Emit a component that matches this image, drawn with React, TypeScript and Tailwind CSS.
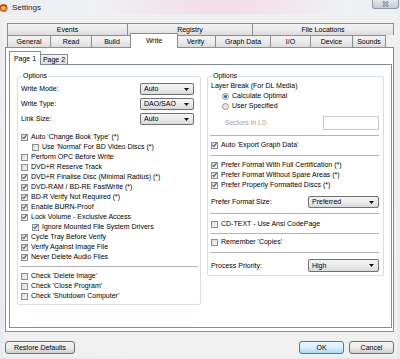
import { clsx } from 'clsx';

const cn = (...a: Parameters<typeof clsx>) => clsx(a);

function Check({ checked }: { checked?: boolean }) {
  return (
    <span className="w-[7px] h-[7px] shrink-0 border border-[#8e8f8f] bg-gradient-to-br from-[#d8d8d8] to-[#fafafa] flex items-center justify-center">
      {checked && (
        <svg width="6" height="6" viewBox="0 0 6 6">
          <path d="M0.7 3.1 L2.3 4.8 L5.4 0.8" fill="none" stroke="#3a5488" strokeWidth="1.3" />
        </svg>
      )}
    </span>
  );
}

function Radio({ on }: { on?: boolean }) {
  return (
    <span className="w-[7px] h-[7px] shrink-0 rounded-full border border-[#8e8f8f] bg-gradient-to-br from-[#d8d8d8] to-[#fafafa] flex items-center justify-center">
      {on && <span className="w-[3px] h-[3px] rounded-full bg-[#1d5fa8]" />}
    </span>
  );
}

function CheckRow({ label, checked, indent }: { label: string; checked?: boolean; indent?: boolean }) {
  return (
    <div className={cn('h-[10px] flex items-center gap-[3px] whitespace-nowrap', indent && 'pl-[11px]')}>
      <Check checked={checked} />
      <span>{label}</span>
    </div>
  );
}

function Combo({ value, className }: { value: string; className?: string }) {
  return (
    <div
      className={cn(
        'h-[12px] flex items-center justify-between border border-[#707070] rounded-[2px] bg-gradient-to-b from-[#f4f4f4] via-[#ebebeb] to-[#d9d9d9] pl-[3px] pr-[4px]',
        className
      )}
    >
      <span>{value}</span>
      <svg width="5" height="3" viewBox="0 0 5 3">
        <path d="M0 0h5L2.5 3z" fill="#111" />
      </svg>
    </div>
  );
}

function Sep({ className }: { className?: string }) {
  return <div className={cn('h-px bg-[#b5b5b5] -mx-[1px]', className)} />;
}

const row1 = [
  { label: 'Events', w: 'w-[121px]' },
  { label: 'Registry', w: 'w-[126px]' },
  { label: 'File Locations', w: 'w-[142px]' },
];

const row2 = [
  { label: 'General', w: 'w-[44px]' },
  { label: 'Read', w: 'w-[42px]' },
  { label: 'Build', w: 'w-[42px]' },
  { label: 'Write', w: 'w-[48px]', active: true },
  { label: 'Verify', w: 'w-[41px]' },
  { label: 'Graph Data', w: 'w-[56px]' },
  { label: 'I/O', w: 'w-[41px]' },
  { label: 'Device', w: 'w-[43px]' },
  { label: 'Sounds', w: 'w-[34px]' },
];

const tabBase = 'h-[12px] flex items-center justify-center border border-[#898c95] border-b-0 -ml-px first:ml-0';
const tabIdle = 'bg-gradient-to-b from-[#f3f3f3] via-[#ebebeb] to-[#dcdcdc]';

export default function App() {
  return (
    <div className="w-[400px] h-[359px] overflow-hidden flex flex-col font-['Liberation_Sans',Arial,sans-serif] text-[7px] leading-[8px] text-black bg-[#e9edf2] bg-[radial-gradient(ellipse_at_55%_0%,#f3dbe8_0%,#eef0f4_40%,#e6eaf0_100%)]">
      {/* Title bar */}
      <div className="h-[14px] shrink-0 relative flex items-center">
        <svg width="10" height="10" viewBox="0 0 10 10" className="-ml-[1px] mt-[1px]">
          <circle cx="4.5" cy="5" r="4" fill="#d2661e" />
          <circle cx="4.5" cy="5" r="2.4" fill="#f0a53a" />
          <circle cx="4.5" cy="5" r="0.9" fill="#fbe3b0" />
          <path d="M1 3.5 Q4.5 0.5 8 3.5" stroke="#b5301a" strokeWidth="1" fill="none" />
        </svg>
        <span className="ml-[3px] mt-[1px] text-[8px] leading-[9px] text-[#1e1e1e]">Settings</span>
        <div className="absolute top-0 right-[1px] w-[27px] h-[9px] rounded-b-[3px] border border-t-0 border-[#8e97a6] bg-gradient-to-b from-[#e4e7ec] to-[#c3c9d2] flex items-center justify-center">
          <svg width="7" height="6" viewBox="0 0 7 6">
            <path d="M1 0.5 L6 5.5 M6 0.5 L1 5.5" stroke="#5d6677" strokeWidth="2" />
            <path d="M1 0.5 L6 5.5 M6 0.5 L1 5.5" stroke="#f4f5f7" strokeWidth="0.9" />
          </svg>
        </div>
      </div>

      {/* Client area */}
      <div className="mx-[3px] h-[343px] bg-[#f0f0f0] flex flex-col pt-[9px] pl-[2px] pr-[3px]">
        {/* Tab rows */}
        <div className="flex ml-[2px]">
          {row1.map((t) => (
            <div key={t.label} className={cn(tabBase, tabIdle, t.w)}>
              {t.label}
            </div>
          ))}
        </div>
        <div className="flex items-end h-[12px] ml-[2px]">
          {row2.map((t) =>
            t.active ? (
              <div
                key={t.label}
                className={cn(
                  'relative z-10 h-[15px] -mb-px -ml-[3px] -mr-[2px] flex items-center justify-center border border-[#898c95] border-b-0 bg-white',
                  t.w
                )}
              >
                {t.label}
              </div>
            ) : (
              <div key={t.label} className={cn(tabBase, tabIdle, t.w)}>
                {t.label}
              </div>
            )
          )}
        </div>

        {/* Tab panel */}
        <div className="h-[285px] border border-[#898c95] bg-white flex flex-col pt-[2px] pl-[3px] pr-[1px] pb-[3px]">
          {/* Page tabs */}
          <div className="flex items-end h-[14px]">
            <div className="relative z-10 w-[32px] h-[14px] -mb-px flex items-center justify-center border border-[#898c95] border-b-0 bg-white">
              Page 1
            </div>
            <div className={cn('w-[28px] h-[10px] -ml-px flex items-center justify-center border border-[#898c95] border-b-0', tabIdle)}>
              Page 2
            </div>
          </div>

          {/* Page panel */}
          <div className="flex-1 border border-[#898c95] bg-white flex items-start gap-[6px] pt-[7px] px-[7px]">
            {/* Left options */}
            <fieldset className="w-[184px] border border-[#d5dfe5] rounded-[2px] px-[3px] pb-[3px]">
              <legend className="ml-[1px] px-[1px] leading-[8px]">Options</legend>
              <div className="flex flex-col gap-[3px] mt-[3px] pr-[3px]">
                <div className="h-[12px] flex items-center justify-between">
                  <span>Write Mode:</span>
                  <Combo value="Auto" className="w-[54px]" />
                </div>
                <div className="h-[12px] flex items-center justify-between">
                  <span>Write Type:</span>
                  <Combo value="DAO/SAO" className="w-[54px]" />
                </div>
                <div className="h-[12px] flex items-center justify-between">
                  <span>Link Size:</span>
                  <Combo value="Auto" className="w-[54px]" />
                </div>
              </div>
              <div className="flex flex-col mt-[7px]">
                <CheckRow label="Auto 'Change Book Type' (*)" checked />
                <CheckRow label="Use 'Normal' For BD Video Discs (*)" indent />
                <CheckRow label="Perform OPC Before Write" />
                <CheckRow label="DVD+R Reserve Track" />
                <CheckRow label="DVD+R Finalise Disc (Minimal Radius) (*)" checked />
                <CheckRow label="DVD-RAM / BD-RE FastWrite (*)" checked />
                <CheckRow label="BD-R Verify Not Required (*)" checked />
                <CheckRow label="Enable BURN-Proof" checked />
                <CheckRow label="Lock Volume - Exclusive Access" checked />
                <CheckRow label="Ignore Mounted File System Drivers" checked indent />
                <CheckRow label="Cycle Tray Before Verify" checked />
                <CheckRow label="Verify Against Image File" checked />
                <CheckRow label="Never Delete Audio Files" checked />
              </div>
              <Sep className="mt-[4px]" />
              <div className="flex flex-col mt-[4px]">
                <CheckRow label="Check 'Delete Image'" />
                <CheckRow label="Check 'Close Program'" />
                <CheckRow label="Check 'Shutdown Computer'" />
              </div>
            </fieldset>

            {/* Right options */}
            <fieldset className="w-[177px] border border-[#d5dfe5] rounded-[2px] px-[3px] pb-[3px]">
              <legend className="ml-[1px] px-[1px] leading-[8px]">Options</legend>
              <div className="h-[10px] flex items-center mt-[1px]">Layer Break (For DL Media)</div>
              <div className="h-[10px] flex items-center gap-[3px] pl-[11px]">
                <Radio on />
                <span>Calculate Optimal</span>
              </div>
              <div className="h-[10px] flex items-center gap-[3px] pl-[11px]">
                <Radio />
                <span>User Specified</span>
              </div>
              <div className="h-[14px] mt-[5px] flex items-center justify-between pl-[14px] pr-[1px]">
                <span className="text-[#a0a0a0]">Sectors in L0:</span>
                <div className="w-[56px] h-[14px] border border-[#c9c9c9] bg-white" />
              </div>
              <Sep className="mt-[5px] mr-[1px]" />
              <div className="flex flex-col mt-[4px]">
                <CheckRow label="Auto 'Export Graph Data'" checked />
              </div>
              <Sep className="mt-[5px] mr-[1px]" />
              <div className="flex flex-col mt-[4px]">
                <CheckRow label="Prefer Format With Full Certification (*)" checked />
                <CheckRow label="Prefer Format Without Spare Areas (*)" checked />
                <CheckRow label="Prefer Properly Formatted Discs (*)" checked />
              </div>
              <div className="h-[12px] mt-[6px] flex items-center justify-between pr-[1px]">
                <span>Prefer Format Size:</span>
                <Combo value="Preferred" className="w-[71px]" />
              </div>
              <Sep className="mt-[5px] mr-[1px]" />
              <div className="flex flex-col mt-[5px]">
                <CheckRow label="CD-TEXT - Use Ansi CodePage" />
              </div>
              <Sep className="mt-[4px] mr-[1px]" />
              <div className="flex flex-col mt-[3px]">
                <CheckRow label="Remember 'Copies'" />
              </div>
              <Sep className="mt-[5px] mr-[1px]" />
              <div className="h-[13px] mt-[6px] flex items-center justify-between pr-[1px]">
                <span>Process Priority:</span>
                <Combo value="High" className="w-[71px] h-[13px]" />
              </div>
            </fieldset>
          </div>
        </div>

        {/* Bottom buttons */}
        <div className="flex items-center mt-[9px] h-[13px]">
          <button className="w-[70px] h-[13px] rounded-[3px] border border-[#707070] bg-gradient-to-b from-[#f2f2f2] via-[#ebebeb] to-[#cfcfcf] leading-[8px]">
            Restore Defaults
          </button>
          <div className="flex-1" />
          <button className="w-[45px] h-[13px] rounded-[3px] border border-[#3c7fb1] bg-gradient-to-b from-[#eaf6fd] via-[#d9f0fc] to-[#a7d9f5] leading-[8px]">
            OK
          </button>
          <button className="ml-[5px] w-[45px] h-[13px] rounded-[3px] border border-[#707070] bg-gradient-to-b from-[#f2f2f2] via-[#ebebeb] to-[#cfcfcf] leading-[8px]">
            Cancel
          </button>
        </div>
      </div>
    </div>
  );
}
